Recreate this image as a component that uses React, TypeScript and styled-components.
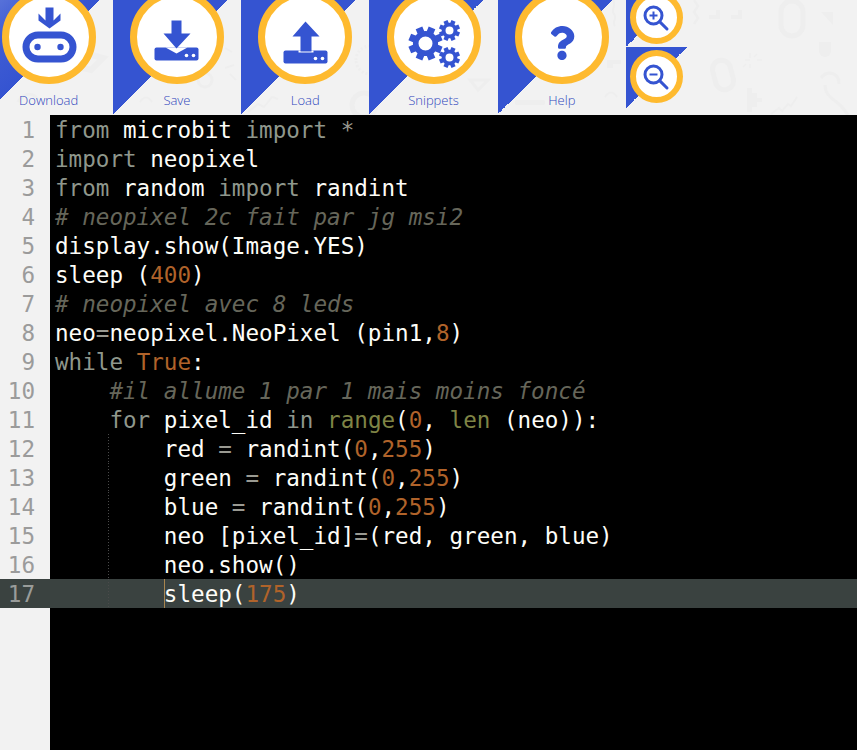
import React from 'react';
import styled, { createGlobalStyle } from 'styled-components';
import { FaQuestion } from 'react-icons/fa';

const BLUE = '#3554d1';
const AMBER = '#feba2f';

const GlobalStyle = createGlobalStyle`
    html, body {
        margin: 0;
        padding: 0;
        background: #000;
    }
`;

type Kind = 'id' | 'kw' | 'num' | 'com' | 'fn' | 'op';
type Tok = [Kind, string];

const code: Tok[][] = [
    [['kw', 'from '], ['id', 'microbit '], ['kw', 'import '], ['op', '*']],
    [['kw', 'import '], ['id', 'neopixel']],
    [['kw', 'from '], ['id', 'random '], ['kw', 'import '], ['id', 'randint']],
    [['com', '# neopixel 2c fait par jg msi2']],
    [['id', 'display.show(Image.YES)']],
    [['id', 'sleep ('], ['num', '400'], ['id', ')']],
    [['com', '# neopixel avec 8 leds']],
    [['id', 'neo'], ['op', '='], ['id', 'neopixel.NeoPixel (pin1,'], ['num', '8'], ['id', ')']],
    [['kw', 'while '], ['num', 'True'], ['id', ':']],
    [['com', '    #il allume 1 par 1 mais moins foncé']],
    [['kw', '    for '], ['id', 'pixel_id '], ['kw', 'in '], ['fn', 'range'], ['id', '('], ['num', '0'], ['id', ', '], ['fn', 'len'], ['id', ' (neo)):']],
    [['id', '        red '], ['op', '='], ['id', ' randint('], ['num', '0'], ['id', ','], ['num', '255'], ['id', ')']],
    [['id', '        green '], ['op', '='], ['id', ' randint('], ['num', '0'], ['id', ','], ['num', '255'], ['id', ')']],
    [['id', '        blue '], ['op', '='], ['id', ' randint('], ['num', '0'], ['id', ','], ['num', '255'], ['id', ')']],
    [['id', '        neo [pixel_id]'], ['op', '='], ['id', '(red, green, blue)']],
    [['id', '        neo.show()']],
    [['id', '        sleep('], ['num', '175'], ['id', ')']],
];

const colors: Record<Kind, string> = {
    id: '#fdfdf8',
    kw: '#8f978c',
    num: '#b0632a',
    com: '#66665a',
    fn: '#7f8445',
    op: '#9a9a92',
};

function Gear({ x, y, r, hole }: { x: number; y: number; r: number; hole: number }) {
    const body = r * 0.74;
    const tooth = r * 0.42;
    return (
        <g transform={`translate(${x} ${y})`}>
            <circle r={(body + hole) / 2} fill="none" stroke={BLUE} strokeWidth={body - hole} />
            {[0, 45, 90, 135, 180, 225, 270, 315].map(a => (
                <rect key={a} x={-tooth / 2} y={-r} width={tooth} height={r * 0.4} fill={BLUE} transform={`rotate(${a + 22.5})`} />
            ))}
        </g>
    );
}

function Tray({ y, notch }: { y: number; notch: string }) {
    return (
        <>
            <rect x={-22} y={y} width={44} height={13} rx={2} fill={BLUE} />
            <polygon points={notch} fill="#fff" />
            <circle cx={10} cy={y + 8} r={1.8} fill="#fff" />
            <circle cx={17} cy={y + 8} r={1.8} fill="#fff" />
        </>
    );
}

const DownloadIcon = () => (
    <IconSvg viewBox="-39.5 -39.5 79 79">
        <polygon points="-10,-24 -3,-17 -3,-30 5,-30 5,-17 12,-24 12,-17 1,-9 -10,-17" fill={BLUE} />
        <rect x={-22.5} y={-2.5} width={47} height={24} rx={12} fill="none" stroke={BLUE} strokeWidth={7} />
        <circle cx={-11} cy={9.5} r={3.2} fill={BLUE} />
        <circle cx={12} cy={9.5} r={3.2} fill={BLUE} />
    </IconSvg>
);

const SaveIcon = () => (
    <IconSvg viewBox="-39.5 -39.5 79 79">
        <Tray y={10} notch="-11,10 0,16 11,10" />
        <polygon points="-5,-17 5,-17 5,-4 14,-4 0,11 -13,-4 -5,-4" fill={BLUE} />
    </IconSvg>
);

const LoadIcon = () => (
    <IconSvg viewBox="-39.5 -39.5 79 79">
        <Tray y={13} notch="-7,13 8,13 8,15 -7,15" />
        <polygon points="0,-16 14,-1 6,-1 6,14 -5,14 -5,-1 -13,-1" fill={BLUE} />
    </IconSvg>
);

const SnippetsIcon = () => (
    <IconSvg viewBox="-39.5 -39.5 79 79">
        <Gear x={-8} y={6} r={17} hole={7} />
        <Gear x={16} y={-7} r={10.5} hole={4} />
        <Gear x={16} y={20} r={10.5} hole={4} />
    </IconSvg>
);

const LensIcon = ({ plus }: { plus?: boolean }) => (
    <svg width="30" height="30" viewBox="-15 -15 30 30">
        <circle cx={-2.5} cy={-1.5} r={8.5} fill="none" stroke={BLUE} strokeWidth={3} />
        <line x1={3.6} y1={4.6} x2={11} y2={12} stroke={BLUE} strokeWidth={3} strokeLinecap="round" />
        <line x1={-6.5} y1={-1.5} x2={1.5} y2={-1.5} stroke={BLUE} strokeWidth={2} />
        {plus && <line x1={-2.5} y1={-5.5} x2={-2.5} y2={2.5} stroke={BLUE} strokeWidth={2} />}
    </svg>
);

// faint doodles behind the toolbar
const Doodles = () => (
    <PatternSvg viewBox="0 0 857 115">
        <g fill="none" stroke="#eeeeee" strokeWidth="4">
            <rect x="781" y="1" width="22" height="35" rx="11" strokeWidth="5" />
            <rect x="714" y="60" width="18" height="30" rx="9" transform="rotate(-15 723 75)" strokeWidth="5" />
            <path d="M718 10v7h-9M740 10v7h-9" />
            <path d="M694 0l4 6-4 6 4 6-4 6" strokeWidth="2.5" />
            <path d="M750 53v5M762 60h-5M745 60h5M750 68v-4M757 54l-3 3M743 67l3-3" strokeWidth="1.5" />
            <path d="M771 114l8-6 3 3 6-7 3 2 6-9" strokeWidth="2" />
            <path d="M821 78c6-8 18-6 18 6M825 85c0 12 10 14 17 22l6 8" strokeWidth="3" />
            <path d="M356 60a14 14 0 1 1 0 .1" strokeWidth="3" strokeDasharray="2 2" />
            <circle cx="364" cy="105" r="12" strokeWidth="5" />
            <path d="M248 112l10-8 6 3 8-10 6 2" strokeWidth="2" />
            <path d="M613 0c4 6-3 10 1 14s-3 8 1 12" strokeWidth="2" />
            <path d="M234 65l-9 3M232 52l-7-4M236 80l-6-6" strokeWidth="2" />
            <path d="M92 55l11 3-12 12-8-2" strokeWidth="6" />
            <path d="M18 102c6-10 16-10 20-2" strokeWidth="3" />
            <circle cx="205" cy="80" r="7" strokeWidth="3" />
            <path d="M470 80h18l-10 10z" strokeWidth="3" />
            <path d="M140 102c4-6 8-6 12 0" strokeWidth="2" />
            <path d="M605 97c4-6 8-6 12 0" strokeWidth="2" />
        </g>
        <g fill="#eeeeee">
            <polygon points="821,12 833,12 833,25" />
            <path d="M819 42h12v9a6 6 0 0 1-12 0z" />
            <path d="M747 88h5v5h5v5h5v4h-5v5h-5v5h-5z" />
            <path d="M607 60h14v4h-8v4h-6z" />
            <rect x="515" y="100" width="30" height="5" rx="2" />
        </g>
    </PatternSvg>
);

const QuestionIcon = styled(FaQuestion)`
    width: 34px;
    height: 34px;
    margin-top: 12px;
    color: ${BLUE};
`;

const buttons = [
    { label: 'Download', icon: <DownloadIcon />, soft: true },
    { label: 'Save', icon: <SaveIcon /> },
    { label: 'Load', icon: <LoadIcon /> },
    { label: 'Snippets', icon: <SnippetsIcon /> },
    { label: 'Help', icon: <QuestionIcon /> },
];

export default function App() {
    return (
        <Page>
            <GlobalStyle />
            <Toolbar>
                <Doodles />
                {buttons.map(b => (
                    <ToolButton key={b.label} $soft={b.soft}>
                        <Circle>{b.icon}</Circle>
                        <Label>{b.label}</Label>
                    </ToolButton>
                ))}
                <ZoomStack>
                    <ZoomButton $top={4.5}>
                        <ZoomCircle><LensIcon plus /></ZoomCircle>
                    </ZoomButton>
                    <ZoomButton $top={2.5}>
                        <ZoomCircle><LensIcon /></ZoomCircle>
                    </ZoomButton>
                </ZoomStack>
            </Toolbar>
            <Editor>
                <Gutter>
                    {code.map((_, i) => (
                        <LineNo key={i} $active={i === 16}>{i + 1}</LineNo>
                    ))}
                </Gutter>
                <Code>
                    {code.map((line, i) => (
                        <CodeLine key={i} $active={i === 16} $guide={i >= 11}>
                            {i === 16 && <Cursor />}
                            {line.map((t, j) => (
                                <Token key={j} $kind={t[0]}>{t[1]}</Token>
                            ))}
                        </CodeLine>
                    ))}
                </Code>
            </Editor>
        </Page>
    );
}

const Page = styled.div`
    width: 857px;
    height: 750px;
    overflow: hidden;
    display: flex;
    flex-direction: column;
`;

const Toolbar = styled.div`
    position: relative;
    height: 115px;
    flex: none;
    display: flex;
    background: #f2f2f2;
    overflow: hidden;
`;

const PatternSvg = styled.svg`
    position: absolute;
    left: 0;
    top: 0;
    width: 857px;
    height: 115px;
`;

const ToolButton = styled.div<{ $soft?: boolean }>`
    position: relative;
    width: 128.3px;
    flex: none;
    margin-left: ${p => (p.$soft ? '-15.5px' : '0')};
    display: flex;
    flex-direction: column;
    align-items: center;
    background: ${p => p.$soft
        ? `linear-gradient(135deg, #6079db 0%, #3f5cd3 25%, ${BLUE} 50%, transparent 50%)`
        : `linear-gradient(135deg, ${BLUE} 50%, transparent 50%)`} 0 0 / 114px 114px no-repeat;
`;

const Circle = styled.div`
    width: 94px;
    height: 94px;
    margin-top: -10px;
    box-sizing: border-box;
    flex: none;
    border: 7.5px solid ${AMBER};
    border-radius: 50%;
    background: #fff;
    display: flex;
    align-items: center;
    justify-content: center;
`;

const IconSvg = styled.svg`
    width: 79px;
    height: 79px;
    overflow: visible;
`;

const Label = styled.div`
    margin-top: 8px;
    font-family: "Open Sans", sans-serif;
    font-size: 13px;
    font-weight: 300;
    line-height: 16px;
    color: #2f47bd;
`;

const ZoomStack = styled.div`
    position: relative;
    width: 61px;
    flex: none;
    margin-top: -14px;
    display: flex;
    flex-direction: column;
`;

const ZoomButton = styled.div<{ $top: number }>`
    height: 61px;
    flex: none;
    box-sizing: border-box;
    padding-top: ${p => p.$top}px;
    display: flex;
    justify-content: center;
    align-items: flex-start;
    background: linear-gradient(135deg, ${BLUE} 50%, transparent 50%);
`;

const ZoomCircle = styled.div`
    width: 53px;
    height: 53px;
    box-sizing: border-box;
    border: 6px solid ${AMBER};
    border-radius: 50%;
    background: #fff;
    display: flex;
    align-items: center;
    justify-content: center;
`;

const Editor = styled.div`
    flex: 1;
    display: flex;
    font-family: "DejaVu Sans Mono", monospace;
    font-size: 22.6px;
    line-height: 31px;
`;

const Gutter = styled.div`
    width: 50px;
    flex: none;
    background: #f2f2f2;
`;

const LineNo = styled.div<{ $active?: boolean }>`
    height: 29px;
    padding-right: 15px;
    text-align: right;
    color: ${p => (p.$active ? '#999c9a' : '#9b9b9b')};
    background: ${p => (p.$active ? '#3a4240' : 'transparent')};
`;

const Code = styled.div`
    flex: 1;
    background: #000;
`;

const CodeLine = styled.div<{ $active?: boolean; $guide?: boolean }>`
    position: relative;
    height: 29px;
    padding-left: 5px;
    white-space: pre;
    background-color: ${p => (p.$active ? '#3a4240' : 'transparent')};
    background-image: ${p => p.$guide
        ? 'repeating-linear-gradient(to bottom, #4a4a4a 0 1px, transparent 1px 3px)'
        : 'none'};
    background-size: 1px 100%;
    background-position: 58px 0;
    background-repeat: no-repeat;
`;

const Cursor = styled.span`
    position: absolute;
    left: 114px;
    top: 0;
    width: 1px;
    height: 29px;
    background: #a8854f;
`;

const Token = styled.span<{ $kind: Kind }>`
    color: ${p => colors[p.$kind]};
    font-style: ${p => (p.$kind === 'com' ? 'italic' : 'normal')};
`;
